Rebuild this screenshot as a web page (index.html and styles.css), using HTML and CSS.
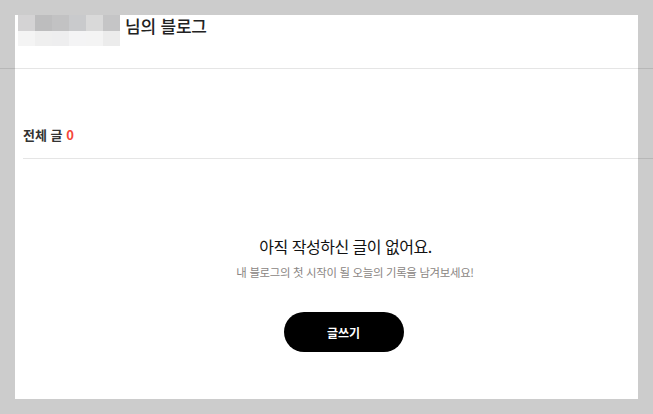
FILE: index.html
```html
<!DOCTYPE html>
<html lang="ko">
<head>
    <meta charset="UTF-8">
    <meta name="viewport" content="width=device-width, initial-scale=1.0">
    <title>님의 블로그</title>
    <link rel="stylesheet" href="styles.css">
</head>
<body>

<div class="page">
    <!-- 블로그 헤더 -->
    <div class="blog-header">
        <div class="blur-name">
            <span class="c1"></span><span class="c2"></span><span class="c3"></span><span class="c4"></span><span class="c5"></span><span class="c6"></span>
            <span class="c7"></span><span class="c8"></span><span class="c9"></span><span class="c10"></span><span class="c11"></span><span class="c12"></span>
        </div>
        <h1 class="blog-title">님의 블로그</h1>
    </div>

    <!-- 글 목록 -->
    <div class="post-count">전체 글 <span class="num">0</span></div>

    <div class="empty">
        <p class="empty-title">아직 작성하신 글이 없어요.</p>
        <p class="empty-desc">내 블로그의 첫 시작이 될 오늘의 기록을 남겨보세요!</p>
        <button class="write-btn">글쓰기</button>
    </div>
</div>

</body>
</html>
```

FILE: styles.css
```css
* {
    margin: 0;
    padding: 0;
    box-sizing: border-box;
}
body {
    font-family: "Noto Sans CJK KR", "Noto Sans", sans-serif;
    background-color: #cccccc;
    color: #222;
    padding: 15px;
}
/* 흰색 본문 영역 */
.page {
    background-color: #fff;
    height: 384px;
}
/* 헤더: 선은 화면 끝까지 */
.blog-header {
    display: flex;
    align-items: flex-start;
    height: 54px;
    margin: 0 -15px;
    padding-left: 18px;
    border-bottom: 1px solid rgba(0, 0, 0, 0.1);
}
.blur-name {
    display: grid;
    grid-template-columns: repeat(6, 17px);
    grid-template-rows: 16px 15px;
}
.c1 { background: #d4d3d4; }
.c2 { background: #bdbdbe; }
.c3 { background: #c2c2c3; }
.c4 { background: #c9cacc; }
.c5 { background: #d9d9d9; }
.c6 { background: #c5c5c6; }
.c7 { background: #f4f4f4; }
.c8 { background: #efefef; }
.c9 { background: #eeeeef; }
.c10 { background: #f4f4f5; }
.c11 { background: #f4f4f4; }
.c12 { background: #ececec; }
.blog-title {
    font-size: 17px;
    font-weight: 500;
    line-height: 22px;
    margin-left: 5px;
    color: #222;
    letter-spacing: -0.2px;
}
/* 전체 글 */
.post-count {
    margin: 0 -15px 0 8px;
    padding: 56px 0 13px;
    font-size: 13px;
    font-weight: 700;
    line-height: 20px;
    color: #333;
    border-bottom: 1px solid rgba(0, 0, 0, 0.1);
}
.post-count .num {
    color: #f5473b;
}
/* 글이 없을 때 */
.empty {
    display: flex;
    flex-direction: column;
    align-items: center;
    margin-left: 36px;
    padding-top: 75px;
}
.empty-title {
    font-size: 16px;
    line-height: 24px;
    color: #111;
    letter-spacing: -0.5px;
    padding-left: 2px;
}
.empty-desc {
    margin-top: 5px;
    padding-left: 21px;
    font-size: 11.4px;
    line-height: 18px;
    color: #8a8683;
    letter-spacing: -0.3px;
}
.write-btn {
    margin-top: 31px;
    margin-right: 2px;
    width: 120px;
    height: 40px;
    border: none;
    border-radius: 20px;
    background-color: #000;
    color: #fff;
    font-family: inherit;
    font-size: 12px;
    font-weight: 700;
    cursor: pointer;
}
```
